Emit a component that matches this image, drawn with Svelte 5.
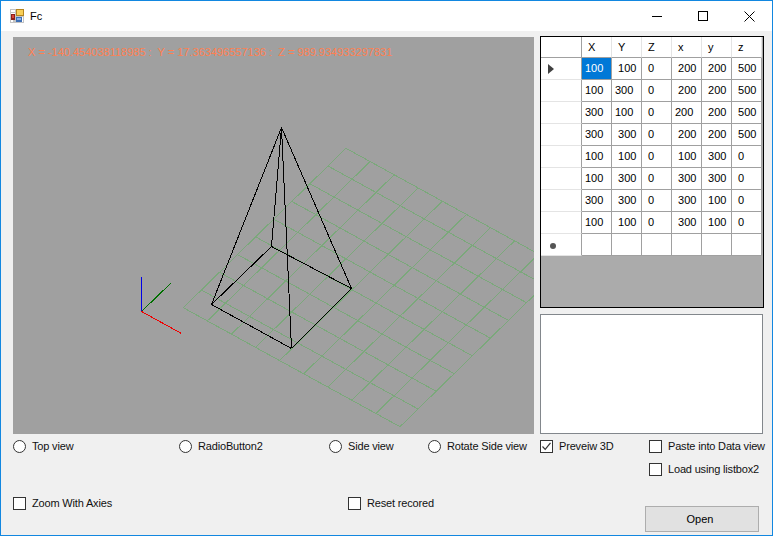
<script>
  const headers = ['X', 'Y', 'Z', 'x', 'y', 'z'];
  const rows = [
    ['100', ' 100', ' 0', ' 200', ' 200', ' 500'],
    ['100', '300', ' 0', ' 200', ' 200', ' 500'],
    ['300', '100', ' 0', '200', ' 200', ' 500'],
    ['300', ' 300', ' 0', ' 200', ' 200', ' 500'],
    ['100', ' 100', ' 0', ' 100', ' 300', ' 0'],
    ['100', ' 300', ' 0', ' 300', ' 300', ' 0'],
    ['300', ' 300', ' 0', ' 300', ' 100', ' 0'],
    ['100', ' 100', ' 0', ' 300', ' 100', ' 0'],
    ['', '', '', '', '', '']
  ];

  // Scene coordinates are relative to the viewport's top-left corner.
  const L = [170.3, 270.7];
  const T = [333, 111.3];
  const B = [387, 389.7];
  const cells = 9;
  const gridLines = [];
  const ux = (T[0] - L[0]) / cells, uy = (T[1] - L[1]) / cells;
  const vx = (B[0] - L[0]) / cells, vy = (B[1] - L[1]) / cells;
  for (let i = 0; i <= cells; i++) {
    gridLines.push([L[0] + ux * i, L[1] + uy * i, L[0] + ux * i + vx * cells, L[1] + uy * i + vy * cells]);
    gridLines.push([L[0] + vx * i, L[1] + vy * i, L[0] + vx * i + ux * cells, L[1] + vy * i + uy * cells]);
  }

  const apex = [268.5, 90.5];
  const pA = [198.5, 267.5];
  const pB = [278.5, 311.5];
  const pC = [338.5, 251.5];
  const pD = [258.5, 209.5];
  const edges = [
    [apex, pA], [apex, pB], [apex, pC], [apex, pD],
    [pA, pB], [pB, pC], [pC, pD], [pD, pA]
  ];
</script>

<div class="window">
  <header class="titlebar">
    <svg class="app-icon" width="14" height="14" viewBox="0 0 14 14">
      <rect x="0" y="0" width="14" height="14" fill="#c4c4c4"/>
      <rect x="1" y="1" width="4" height="2" fill="#fff"/>
      <rect x="1" y="11" width="2" height="2" fill="#fff"/>
      <rect x="12" y="8" width="1" height="5" fill="#fff"/>
      <rect x="1" y="4" width="4" height="6" fill="#fff"/>
      <rect x="6" y="0" width="8" height="7" fill="#b5851f"/>
      <rect x="7" y="1" width="6" height="5" fill="#f8cf58"/>
      <rect x="1" y="5" width="4" height="6" fill="#8c1f1a"/>
      <rect x="2" y="6" width="2" height="3" fill="#d8453a"/>
      <rect x="6" y="8" width="6" height="5" fill="#3d6fb5"/>
      <rect x="7" y="9" width="4" height="2" fill="#8db4ea"/>
    </svg>
    <span class="title">Fc</span>
    <div class="caption">
      <button class="cap" aria-label="Minimize"><svg width="10" height="10"><path d="M0 5.5H10" stroke="#000"/></svg></button>
      <button class="cap" aria-label="Maximize"><svg width="10" height="10"><rect x="0.5" y="0.5" width="9" height="9" fill="none" stroke="#000"/></svg></button>
      <button class="cap" aria-label="Close"><svg width="11" height="11"><path d="M0.5 0.5L10.5 10.5M10.5 0.5L0.5 10.5" stroke="#000"/></svg></button>
    </div>
  </header>

  <main class="client">
    <div class="top">
      <section class="viewport">
        <svg class="scene" width="521" height="397">
          {#each gridLines as l}
            <line x1={l[0]} y1={l[1]} x2={l[2]} y2={l[3]} class="g"/>
          {/each}
          {#each edges as e}
            <line x1={e[0][0]} y1={e[0][1]} x2={e[1][0]} y2={e[1][1]} class="k"/>
          {/each}
          <line x1="128.5" y1="274.5" x2="128.5" y2="239.5" class="axis" stroke="#0000e6"/>
          <line x1="128.5" y1="274.5" x2="158.5" y2="245.5" class="axis" stroke="#007000"/>
          <line x1="128.5" y1="274.5" x2="168.5" y2="296.5" class="axis" stroke="#f00000"/>
        </svg>
        <div class="readout">X = -140.454038118985 :&nbsp; Y = 17.363496557136 :&nbsp; Z = 989.934933297831</div>
      </section>

      <aside class="side">
        <div class="dgv">
          <div class="dgv-row head">
            <div class="rh"></div>
            {#each headers as h}<div class="ch">{h}</div>{/each}
          </div>
          {#each rows as row, r}
            <div class="dgv-row">
              <div class="rh">
                {#if r === 0}
                  <svg width="6" height="10" viewBox="0 0 6 10"><path d="M0 0L6 5L0 10Z" fill="#404040"/></svg>
                {:else if r === rows.length - 1}
                  <span class="star"></span>
                {/if}
              </div>
              {#each row as c, i}
                <div class="cell" class:sel={r === 0 && i === 0}>{c}</div>
              {/each}
            </div>
          {/each}
        </div>
        <div class="listbox"></div>
      </aside>
    </div>

    <div class="controls">
      <div class="left-controls">
        <div class="radios">
          <label class="opt r1"><span class="radio"></span>Top view</label>
          <label class="opt r2"><span class="radio"></span>RadioButton2</label>
          <label class="opt r3"><span class="radio"></span>Side view</label>
          <label class="opt"><span class="radio"></span>Rotate Side view</label>
        </div>
        <div class="checks">
          <label class="opt c1"><span class="check"></span>Zoom With Axies</label>
          <label class="opt"><span class="check"></span>Reset recored</label>
        </div>
      </div>
      <div class="right-controls">
        <div class="right-top">
          <label class="opt preview">
            <span class="check"><svg width="11" height="11" viewBox="0 0 11 11"><path d="M1.5 5.5L4.2 8.3L9.5 1.8" fill="none" stroke="#333" stroke-width="1.2"/></svg></span>Preveiw 3D
          </label>
          <div class="stack">
            <label class="opt"><span class="check"></span>Paste into Data view</label>
            <label class="opt"><span class="check"></span>Load using listbox2</label>
          </div>
        </div>
        <button class="open">Open</button>
      </div>
    </div>
  </main>
</div>

<style>
  :global(body) {
    margin: 0;
    background: #fff;
  }
  .window {
    box-sizing: border-box;
    width: 773px;
    height: 536px;
    border: 1px solid #1287e0;
    background: #f0f0f0;
    display: flex;
    flex-direction: column;
    font-family: "Liberation Sans", Arial, sans-serif;
    font-size: 11px;
    color: #000;
    overflow: hidden;
  }
  .titlebar {
    height: 30px;
    background: #fff;
    display: flex;
    align-items: center;
    padding-left: 9px;
    flex: none;
  }
  .app-icon {
    flex: none;
  }
  .title {
    margin-left: 6px;
    font-size: 11px;
    white-space: nowrap;
  }
  .caption {
    margin-left: auto;
    display: flex;
  }
  .cap {
    width: 46px;
    height: 30px;
    border: 0;
    padding: 0;
    background: transparent;
    display: flex;
    align-items: center;
    justify-content: center;
  }
  .client {
    flex: 1;
    display: flex;
    flex-direction: column;
    padding: 5px 0 0 12px;
    min-height: 0;
  }
  .top {
    display: flex;
    height: 398px;
  }
  .viewport {
    position: relative;
    width: 521px;
    height: 397px;
    margin-top: 1px;
    background: #a0a0a0;
    overflow: hidden;
    flex: none;
  }
  .scene {
    display: block;
  }
  .g {
    stroke: #7ba87b;
    stroke-width: 1;
    shape-rendering: crispEdges;
  }
  .k {
    stroke: #000;
    stroke-width: 1;
    shape-rendering: crispEdges;
  }
  .axis {
    stroke-width: 1;
    shape-rendering: crispEdges;
  }
  .readout {
    position: absolute;
    left: 15px;
    top: 8px;
    font-size: 11px;
    line-height: 15px;
    color: #ff7f50;
    white-space: nowrap;
  }
  .side {
    margin-left: 6px;
    width: 224px;
    display: flex;
    flex-direction: column;
    gap: 6px;
  }
  .dgv {
    box-sizing: border-box;
    height: 272px;
    border: 1px solid #000;
    background: #ababab;
  }
  .dgv-row {
    display: flex;
    height: 22px;
  }
  .dgv-row.head {
    height: 21px;
  }
  .rh {
    box-sizing: border-box;
    width: 41px;
    background: #fff;
    border-right: 1px solid #a0a0a0;
    border-bottom: 1px solid #e4e4e4;
    display: flex;
    align-items: center;
    padding-left: 7px;
  }
  .head .rh {
    border-bottom-color: #a0a0a0;
  }
  .ch {
    box-sizing: border-box;
    width: 30px;
    padding-left: 6px;
    background: #fff;
    border-right: 1px solid #e4e4e4;
    border-bottom: 1px solid #a0a0a0;
    line-height: 20px;
  }
  .cell {
    box-sizing: border-box;
    width: 30px;
    padding-left: 3px;
    background: #fff;
    border-right: 1px solid #a0a0a0;
    border-bottom: 1px solid #a0a0a0;
    white-space: pre;
    line-height: 21px;
  }
  .cell.sel {
    background: #0078d7;
    color: #fff;
  }
  .star {
    width: 6px;
    height: 6px;
    margin: 3px 0 0 2px;
    border-radius: 50%;
    background: #555;
  }
  .listbox {
    box-sizing: border-box;
    height: 120px;
    width: 223px;
    background: #fff;
    border: 1px solid #82878c;
  }
  .controls {
    display: flex;
    flex: 1;
  }
  .left-controls {
    width: 527px;
    flex: none;
    padding-top: 5px;
  }
  .radios {
    display: flex;
  }
  .r1 { width: 166px; }
  .r2 { width: 150px; }
  .r3 { width: 99px; }
  .checks {
    display: flex;
    margin-top: 43px;
  }
  .c1 { width: 335px; }
  .opt {
    display: flex;
    align-items: center;
    height: 14px;
    white-space: nowrap;
    color: #111;
    letter-spacing: -0.17px;
  }
  .radio {
    box-sizing: border-box;
    width: 13px;
    height: 13px;
    border: 1px solid #333;
    border-radius: 50%;
    background: #fff;
    margin-right: 6px;
    flex: none;
  }
  .check {
    box-sizing: border-box;
    width: 13px;
    height: 13px;
    border: 1px solid #333;
    background: #fff;
    margin-right: 6px;
    flex: none;
    display: flex;
    align-items: center;
    justify-content: center;
  }
  .right-controls {
    flex: 1;
    display: flex;
    flex-direction: column;
    padding-top: 5px;
  }
  .right-top {
    display: flex;
  }
  .preview {
    width: 109px;
  }
  .stack {
    display: flex;
    flex-direction: column;
    gap: 9px;
  }
  .open {
    box-sizing: border-box;
    align-self: flex-start;
    width: 114px;
    height: 26px;
    margin: 30px 0 0 105px;
    background: #e1e1e1;
    border: 1px solid #adadad;
    font: inherit;
    color: #000;
    padding: 0 4px 0 0;
  }
</style>
